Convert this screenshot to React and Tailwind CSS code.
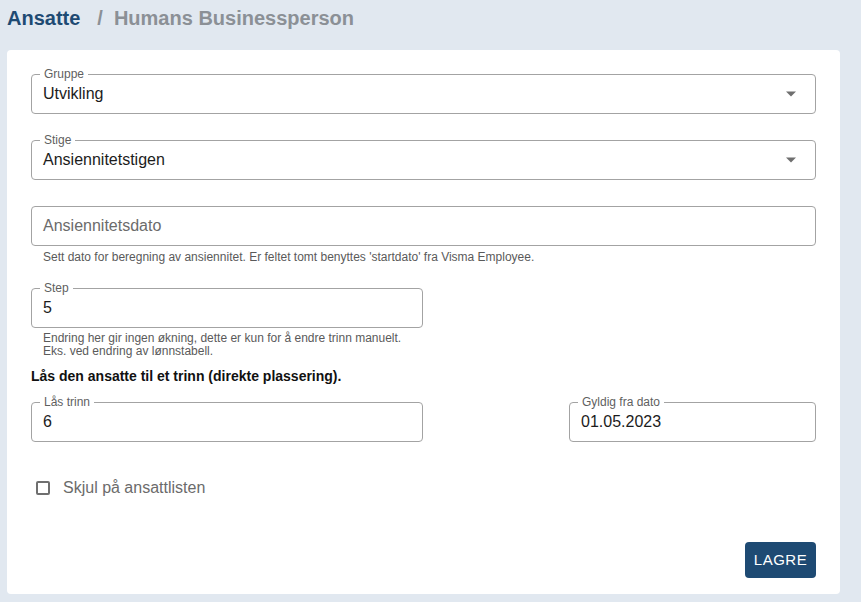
import React from "react";

const font = { fontFamily: '"Liberation Sans", Arial, sans-serif' };

function Field({ label, value, placeholder, select, className = "" }) {
  return (
    <div className={"relative h-[40px] rounded-[4px] border border-[#a3a3a3] bg-white flex items-center pl-[11px] pr-[18px] " + className}>
      {label && (
        <span className="absolute left-[8px] top-[-8px] bg-white px-[4px] text-[12px] leading-[14px] text-[#5f5f5f]">
          {label}
        </span>
      )}
      <span className={"flex-1 text-[16px] leading-[19px] pb-[1px] " + (value ? "text-[#1c1c1c]" : "text-[#6b6b6b]")}>
        {value || placeholder}
      </span>
      {select && (
        <svg width="12" height="6" viewBox="0 0 12 6" className="shrink-0">
          <path d="M1 0.5 L11 0.5 L6 5.5 Z" fill="#6f6f6f" />
        </svg>
      )}
    </div>
  );
}

export default function App() {
  return (
    <div style={font} className="min-h-[602px] w-[861px] bg-[#e1e8f0] px-[7px]">
      <div className="h-[50px] pt-[6px] text-[20px] leading-[24px] font-bold flex">
        <span className="text-[#1e4a73]">Ansatte</span>
        <span className="text-[#8b9096] ml-[17px]">/</span>
        <span className="text-[#8b9096] ml-[11px]">Humans Businessperson</span>
      </div>
      <div className="w-[833px] h-[544px] bg-white rounded-[4px] px-[24px] pt-[24px]">
        <Field label="Gruppe" value="Utvikling" select />
        <Field label="Stige" value="Ansiennitetstigen" select className="mt-[26px]" />
        <Field placeholder="Ansiennitetsdato" className="mt-[26px]" />
        <p className="mt-[4px] pl-[12px] text-[12px] leading-[14px] text-[#5a5a5a]">
          Sett dato for beregning av ansiennitet. Er feltet tomt benyttes 'startdato' fra Visma Employee.
        </p>
        <Field label="Step" value="5" className="mt-[24px] w-[392px]" />
        <p className="mt-[4px] pl-[12px] text-[12px] leading-[12.5px] text-[#5a5a5a]">
          Endring her gir ingen økning, dette er kun for å endre trinn manuelt.
          <br />
          Eks. ved endring av lønnstabell.
        </p>
        <p className="mt-[11px] text-[14px] leading-[16px] font-bold text-[#111]">
          Lås den ansatte til et trinn (direkte plassering).
        </p>
        <div className="mt-[18px] flex justify-between">
          <Field label="Lås trinn" value="6" className="w-[392px]" />
          <Field label="Gyldig fra dato" value="01.05.2023" className="w-[247px]" />
        </div>
        <div className="mt-[36px] flex items-center pl-[5px]">
          <span className="w-[14px] h-[14px] border-2 border-[#6f6f6f] rounded-[2px] bg-white" />
          <span className="ml-[13px] text-[16px] leading-[19px] text-[#6b6b6b]">Skjul på ansattlisten</span>
        </div>
        <div className="mt-[45px] flex justify-end">
          <button className="h-[36px] w-[71px] rounded-[4px] bg-[#1e4a73] text-white text-[15px] tracking-[0.5px]">
            LAGRE
          </button>
        </div>
      </div>
    </div>
  );
}
